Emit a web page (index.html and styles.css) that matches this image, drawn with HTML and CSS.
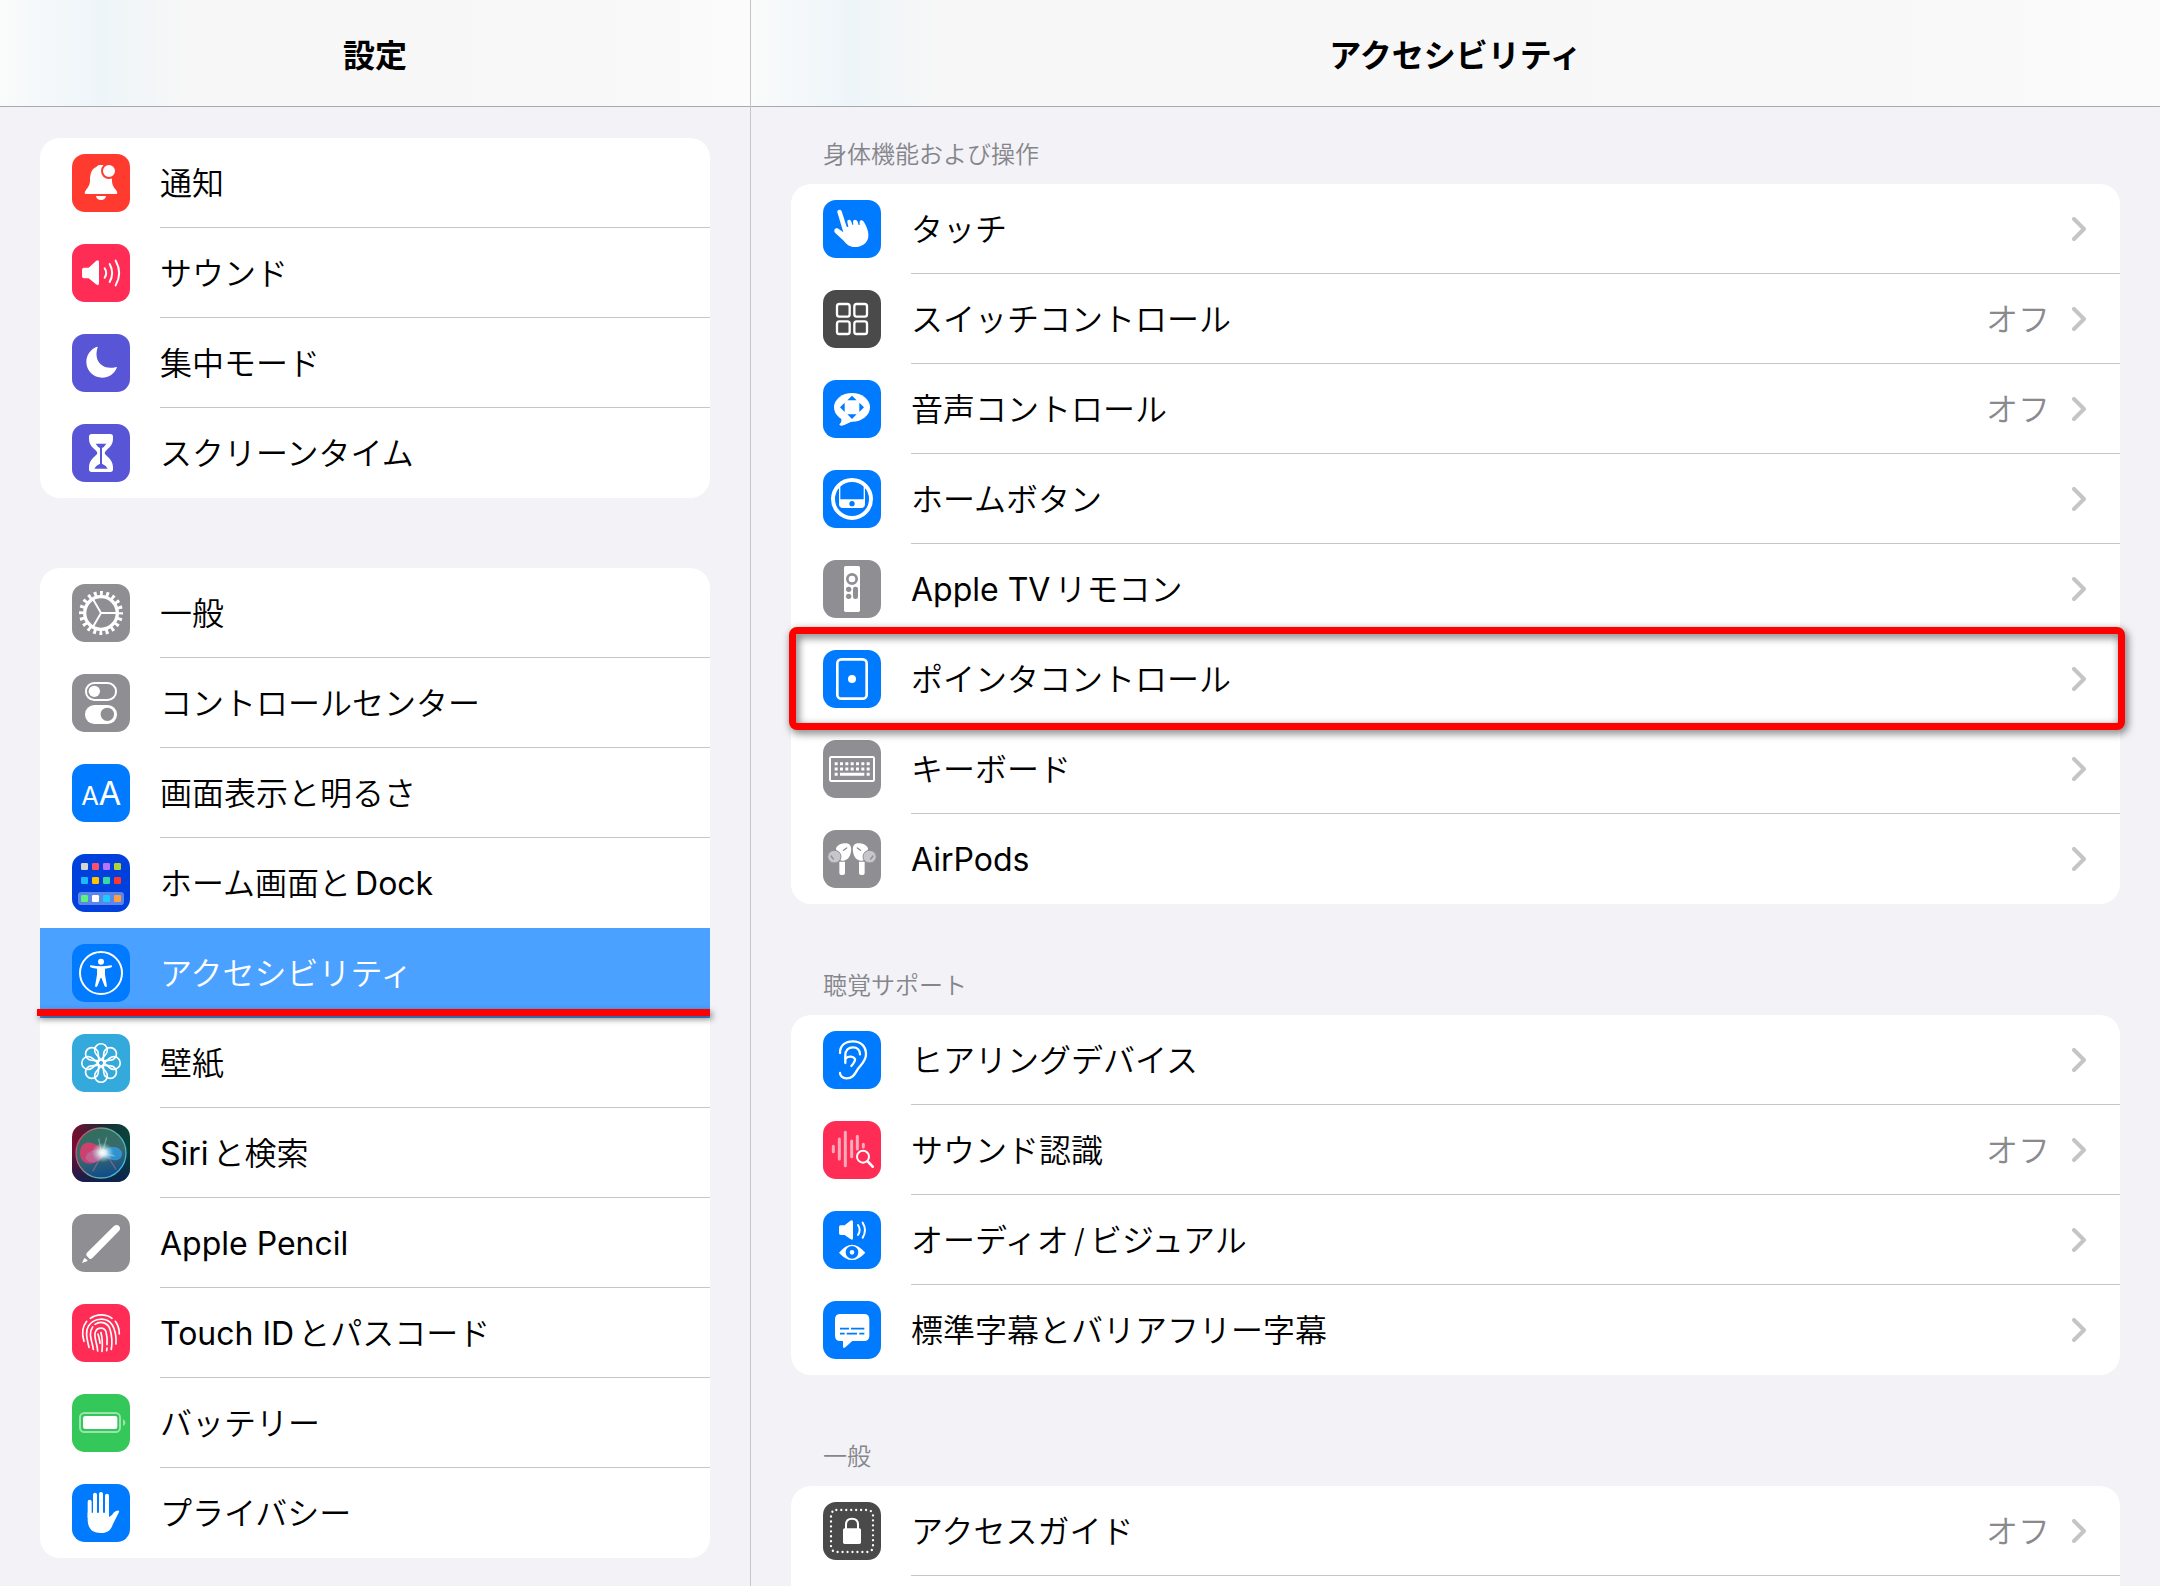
FILE: index.html
```html
<!doctype html>
<html lang="ja">
  <head>
    <meta charset="UTF-8" />
    <meta name="viewport" content="width=device-width, initial-scale=1.0" />
    <title>設定</title>
    <link rel="stylesheet" href="styles.css">
  </head>
  <body>
    <aside class="pane sidebar">
      <header class="pane-header">
        <h1>設定</h1>
      </header>

      <nav class="pane-body sidebar-body">
        <ul class="group">
          <li>
            <a class="row" href="#">
              <svg class="icon red" viewBox="0 0 174 174" fill="#fff">
                <path d="M42 120C36 120 38 113 42 108C50 98 54 92 54 78C54 58 60 44 73 39C76 34 82 33 87 33S98 34 101 39C114 44 120 58 120 78C120 92 124 98 132 108C136 113 138 120 132 120Z" />
                <circle cx="111" cy="51" r="21" stroke="#ff3b30" stroke-width="6" />
                <path d="M72 126H102C101 134 95 138 87 138S73 134 72 126Z" />
              </svg>
              <span class="label">通知</span>
            </a>
          </li>
          <li>
            <a class="row" href="#">
              <svg class="icon pink" viewBox="0 0 174 174" fill="#fff">
                <path d="M36 71H50L72 51Q81 46 81 54V118Q81 127 72 121L50 103H36Q30 103 30 97V77Q30 71 36 71Z" />
                <path d="M98 73Q107 87 98 101M113 60Q128 87 113 114M131 50Q152 87 131 124" fill="none" stroke="#fff" stroke-width="6" stroke-linecap="round" />
              </svg>
              <span class="label">サウンド</span>
            </a>
          </li>
          <li>
            <a class="row" href="#">
              <svg class="icon indigo" viewBox="0 0 174 174" fill="#fff">
                <path d="M77 40C70 62 74 80 86 91C98 102 114 104 133 99Q136 98 134 102C126 121 109 131 91 131C64 131 43 110 43 84C43 63 56 46 73 39Q78 37 77 40Z" />
              </svg>
              <span class="label">集中モード</span>
            </a>
          </li>
          <li>
            <a class="row" href="#">
              <svg class="icon indigo" viewBox="0 0 174 174" fill="#fff">
                <path d="M59 30H115Q123 30 123 38V44C123 62 112 70 104 78Q98 84 98 87Q98 90 104 95C112 103 123 112 123 130V136Q123 144 115 144H59Q51 144 51 136V130C51 112 62 103 70 95Q76 90 76 87Q76 84 70 78C62 70 51 62 51 44V38Q51 30 59 30Z" />
                <path d="M71 59H103Q96 70 90 72V119Q102 124 107 134H67Q72 124 84 119V72Q78 70 71 59Z" fill="#5856d6" />
              </svg>
              <span class="label">スクリーンタイム</span>
            </a>
          </li>
        </ul>

        <ul class="group">
          <li>
            <a class="row" href="#">
              <svg class="icon gray" viewBox="0 0 174 174" fill="none" stroke="#fff">
                <circle cx="87" cy="87" r="49" stroke-width="10" />
                <circle cx="87" cy="87" r="59" stroke-width="14" pathLength="200" stroke-dasharray="4.6 5.4" stroke-dashoffset="2.3" />
                <path d="M87 87H134M87 87L64 47M87 87L64 127" stroke-width="6" />
              </svg>
              <span class="label">一般</span>
            </a>
          </li>
          <li>
            <a class="row" href="#">
              <svg class="icon gray" viewBox="0 0 174 174" fill="#fff">
                <rect x="42" y="27" width="90" height="51" rx="25" fill="none" stroke="#fff" stroke-width="6" />
                <circle cx="67" cy="52" r="17" />
                <rect x="39" y="93" width="96" height="57" rx="28" />
                <circle cx="106" cy="121" r="20" fill="#8e8e93" />
              </svg>
              <span class="label">コントロールセンター</span>
            </a>
          </li>
          <li>
            <a class="row" href="#">
              <svg class="icon blue" viewBox="0 0 174 174" fill="#fff" text-anchor="middle">
                <text class="glyph" x="54" y="124" font-size="77">A</text>
                <text class="glyph" x="114" y="124" font-size="99">A</text>
              </svg>
              <span class="label">画面表示と明るさ</span>
            </a>
          </li>
          <li>
            <a class="row no-line" href="#">
              <svg class="icon royal" viewBox="0 0 174 174">
                <rect x="18" y="114" width="138" height="39" rx="10" fill="#5b86ea" />
                <rect x="27" y="27" width="21" height="21" rx="4" fill="#d6d6d0" />
                <rect x="60" y="27" width="21" height="21" rx="4" fill="#ff5068" />
                <rect x="93" y="27" width="21" height="21" rx="4" fill="#b773ff" />
                <rect x="126" y="27" width="21" height="21" rx="4" fill="#b0d236" />
                <rect x="27" y="69" width="21" height="21" rx="4" fill="#1cb8fa" />
                <rect x="60" y="69" width="21" height="21" rx="4" fill="#ffc300" />
                <rect x="93" y="69" width="21" height="21" rx="4" fill="#38d8a5" />
                <rect x="126" y="69" width="21" height="21" rx="4" fill="#ff382e" />
                <rect x="27" y="123" width="21" height="21" rx="4" fill="#5df27a" />
                <rect x="60" y="123" width="21" height="21" rx="4" fill="#fff" />
                <rect x="93" y="123" width="21" height="21" rx="4" fill="#1ccbff" />
                <rect x="126" y="123" width="21" height="21" rx="4" fill="#ff9f45" />
              </svg>
              <span class="label">ホーム画面と<span lang="en">Dock</span></span>
            </a>
          </li>
          <li>
            <a class="row selected underlined" href="#" aria-current="page">
              <svg class="icon blue" viewBox="0 0 174 174" fill="#fff">
                <circle cx="87" cy="87" r="63" fill="none" stroke="#fff" stroke-width="6" />
                <circle cx="87" cy="53" r="9" />
                <path d="M57 64Q87 70 117 64Q121 64 120 68Q119 71 99 74V92L105 127Q102 131 98 127L88 101H86L76 127Q72 131 69 127L75 92V74Q55 71 54 68Q53 64 57 64Z" />
              </svg>
              <span class="label">アクセシビリティ</span>
            </a>
          </li>
          <li>
            <a class="row" href="#">
              <svg class="icon cyan" viewBox="0 0 174 174" fill="none" stroke="#fff" stroke-width="5">
                <defs>
                  <path id="petal" d="M87 78L72 60A19 19 0 1 1 102 60Z" />
                </defs>
                <use href="#petal" />
                <use href="#petal" transform="rotate(45 87 87)" />
                <use href="#petal" transform="rotate(90 87 87)" />
                <use href="#petal" transform="rotate(135 87 87)" />
                <use href="#petal" transform="rotate(180 87 87)" />
                <use href="#petal" transform="rotate(225 87 87)" />
                <use href="#petal" transform="rotate(270 87 87)" />
                <use href="#petal" transform="rotate(315 87 87)" />
                <circle cx="87" cy="87" r="9" />
              </svg>
              <span class="label">壁紙</span>
            </a>
          </li>
          <li>
            <a class="row" href="#">
              <svg class="icon siri" viewBox="0 0 174 174">
                <defs>
                  <linearGradient id="siri-back" x1="0" y1="0" x2="1" y2="0">
                    <stop offset="0" stop-color="#7a0c30" />
                    <stop offset="0.5" stop-color="#1d2a35" />
                    <stop offset="1" stop-color="#06453c" />
                  </linearGradient>
                  <linearGradient id="siri-shade" x1="0" y1="0" x2="0" y2="1">
                    <stop offset="0.4" stop-color="#0a1f4a" stop-opacity="0" />
                    <stop offset="1" stop-color="#0c1f52" stop-opacity="0.85" />
                  </linearGradient>
                  <linearGradient id="siri-ring" x1="0" y1="0.3" x2="1" y2="0.7">
                    <stop offset="0" stop-color="#e0406c" />
                    <stop offset="0.5" stop-color="#5fae98" />
                    <stop offset="1" stop-color="#3fb7e6" />
                  </linearGradient>
                  <linearGradient id="siri-orb" x1="0.4" y1="0" x2="0.6" y2="1">
                    <stop offset="0" stop-color="#2f6f5c" />
                    <stop offset="0.5" stop-color="#3a6a6c" />
                    <stop offset="1" stop-color="#0d4a8c" />
                  </linearGradient>
                  <radialGradient id="siri-glow">
                    <stop offset="0" stop-color="#fff" />
                    <stop offset="0.3" stop-color="#f4fdff" stop-opacity="0.85" />
                    <stop offset="1" stop-color="#9fe0e6" stop-opacity="0" />
                  </radialGradient>
                </defs>
                <rect width="174" height="174" fill="url(#siri-back)" />
                <rect width="174" height="174" fill="url(#siri-shade)" />
                <circle cx="87" cy="87" r="75" fill="url(#siri-orb)" stroke="url(#siri-ring)" stroke-width="4" />
                <path d="M100 88C78 126 28 132 24 90C22 46 66 42 100 88Z" fill="#e63a70" fill-opacity="0.85" />
                <path d="M40 104C64 126 84 112 96 94L84 80C66 74 44 82 40 104Z" fill="#a9a0d8" fill-opacity="0.35" />
                <path d="M84 88C100 66 142 60 150 86C152 114 116 118 84 88Z" fill="#2f9be0" fill-opacity="0.85" />
                <path d="M104 92L132 136M88 96L62 142" stroke="#b06c9c" stroke-width="4" stroke-opacity="0.6" />
                <ellipse cx="92" cy="86" rx="34" ry="30" fill="url(#siri-glow)" />
                <path d="M88 86L80 44M92 84L104 40M92 88L128 96" stroke="#dff6f4" stroke-width="4" stroke-opacity="0.35" />
              </svg>
              <span class="label"><span lang="en">Siri</span>と検索</span>
            </a>
          </li>
          <li>
            <a class="row" href="#">
              <svg class="icon gray" viewBox="0 0 174 174" fill="#fff">
                <path d="M125 37Q134 29 141 36Q148 44 140 52L62 131Q55 138 50 132L44 125Q40 120 47 114Z" />
                <path d="M30 147L37 132Q44 134 47 141Z" />
              </svg>
              <span class="label"><span lang="en">Apple Pencil</span></span>
            </a>
          </li>
          <li>
            <a class="row" href="#">
              <svg class="icon pink" viewBox="0 0 174 174" fill="none" stroke="#fff" stroke-width="5" stroke-linecap="round">
                <path d="M55 43C74 29 102 29 120 43" />
                <path d="M44 52C32 67 29 90 36 112M130 52C138 63 142 75 142 90" />
                <path d="M51 130C46 108 38 84 50 65C66 41 104 38 121 63C130 78 133 100 132 120" />
                <path d="M64 136C60 110 48 88 62 69M69 61C86 49 108 56 114 76C119 92 121 116 118 136" />
                <path d="M77 141C76 118 64 98 70 84C76 68 98 69 102 84C106 98 106 110 105 122M105 132L104 140" />
                <path d="M87 86C92 105 92 122 90 142M78 90C80 98 84 108 84 118" />
              </svg>
              <span class="label"><span lang="en">Touch ID</span>とパスコード</span>
            </a>
          </li>
          <li>
            <a class="row" href="#">
              <svg class="icon green" viewBox="0 0 174 174" fill="#fff">
                <rect x="24" y="57" width="120" height="57" rx="13" fill="none" stroke="#fff" stroke-opacity="0.5" stroke-width="6" />
                <rect x="33" y="66" width="103" height="39" rx="7" />
                <path d="M153 75Q168 86 153 97Z" fill-opacity="0.5" />
              </svg>
              <span class="label">バッテリー</span>
            </a>
          </li>
          <li>
            <a class="row" href="#">
              <svg class="icon blue" viewBox="0 0 174 174" fill="#fff">
                <path d="M53 53V100M69 32V95M87 30V95M105 35V95" stroke="#fff" stroke-width="12" stroke-linecap="round" />
                <path d="M47 86V105C47 135 62 147 86 147C108 147 116 138 122 122L141 84Q143 79 135 80Q127 81 120 93L111 99V86Z" />
              </svg>
              <span class="label">プライバシー</span>
            </a>
          </li>
        </ul>
      </nav>
    </aside>

    <main class="pane detail">
      <header class="pane-header">
        <h2>アクセシビリティ</h2>
      </header>

      <div class="pane-body detail-body">
        <h3 class="group-title">身体機能および操作</h3>
        <ul class="group">
          <li>
            <a class="row" href="#">
              <svg class="icon blue" viewBox="0 0 174 174" fill="#fff">
                <path d="M43 37C41 28 54 26 56 34L71 80L76 81L73 66C72 58 82 57 85 65L88 74L91 74L90 65C91 57 101 57 104 65L107 75L110 75L110 65C113 58 121 60 124 68C134 85 137 98 136 110C134 130 115 141 95 141C80 141 70 133 62 122L36 98C30 90 38 82 46 86L61 97Z" />
              </svg>
              <span class="label">タッチ</span>
              <svg class="chevron" viewBox="0 0 14 24"><path d="M2 2L12 12L2 22" /></svg>
            </a>
          </li>
          <li>
            <a class="row" href="#">
              <svg class="icon dark" viewBox="0 0 174 174" fill="none" stroke="#fff" stroke-width="7">
                <rect x="42" y="42" width="38" height="38" rx="7" />
                <rect x="94" y="42" width="38" height="38" rx="7" />
                <rect x="42" y="94" width="38" height="38" rx="7" />
                <rect x="94" y="94" width="38" height="38" rx="7" />
              </svg>
              <span class="label">スイッチコントロール</span>
              <span class="value">オフ</span>
              <svg class="chevron" viewBox="0 0 14 24"><path d="M2 2L12 12L2 22" /></svg>
            </a>
          </li>
          <li>
            <a class="row" href="#">
              <svg class="icon blue" viewBox="0 0 174 174" fill="#fff">
                <ellipse cx="87" cy="82" rx="54" ry="43" />
                <path d="M52 112Q60 124 49 133Q50 140 64 135L96 120Z" />
                <path d="M87 47L101 61H73ZM87 117L101 103H73ZM51 82L65 68V96ZM123 82L109 68V96Z" fill="#007aff" />
              </svg>
              <span class="label">音声コントロール</span>
              <span class="value">オフ</span>
              <svg class="chevron" viewBox="0 0 14 24"><path d="M2 2L12 12L2 22" /></svg>
            </a>
          </li>
          <li>
            <a class="row" href="#">
              <svg class="icon blue" viewBox="0 0 174 174" fill="#fff">
                <circle cx="87" cy="87" r="57" fill="none" stroke="#fff" stroke-width="12" />
                <path d="M50 50V92M124 50V92" stroke="#fff" stroke-width="4" />
                <path d="M48 88H126V103Q126 114 114 114H60Q48 114 48 103Z" />
                <circle cx="87" cy="101" r="8" fill="#007aff" />
              </svg>
              <span class="label">ホームボタン</span>
              <svg class="chevron" viewBox="0 0 14 24"><path d="M2 2L12 12L2 22" /></svg>
            </a>
          </li>
          <li>
            <a class="row" href="#">
              <svg class="icon gray" viewBox="0 0 174 174" fill="#8e8e93">
                <rect x="63" y="18" width="48" height="138" rx="5" fill="#fff" />
                <circle cx="87" cy="57" r="14" fill="none" stroke="#8e8e93" stroke-width="8" />
                <circle cx="77" cy="88" r="8" />
                <circle cx="77" cy="109" r="8" />
                <rect x="90" y="80" width="15" height="37" rx="7" />
              </svg>
              <span class="label"><span lang="en">Apple TV</span>リモコン</span>
              <svg class="chevron" viewBox="0 0 14 24"><path d="M2 2L12 12L2 22" /></svg>
            </a>
          </li>
          <li>
            <a class="row framed" href="#">
              <svg class="icon blue" viewBox="0 0 174 174" fill="#fff">
                <rect x="43" y="28" width="88" height="118" rx="12" fill="none" stroke="#fff" stroke-width="8" />
                <circle cx="87" cy="87" r="12" />
              </svg>
              <span class="label">ポインタコントロール</span>
              <svg class="chevron" viewBox="0 0 14 24"><path d="M2 2L12 12L2 22" /></svg>
            </a>
          </li>
          <li>
            <a class="row" href="#">
              <svg class="icon gray" viewBox="0 0 174 174" fill="none" stroke="#fff">
                <rect x="21" y="51" width="132" height="72" rx="4" stroke-width="6" />
                <path d="M35 71H140M35 87H140" stroke-width="9" stroke-dasharray="9 7" />
                <path d="M35 103H44M51 103H124M131 103H140" stroke-width="9" />
              </svg>
              <span class="label">キーボード</span>
              <svg class="chevron" viewBox="0 0 14 24"><path d="M2 2L12 12L2 22" /></svg>
            </a>
          </li>
          <li>
            <a class="row" href="#">
              <svg class="icon gray" viewBox="0 0 174 174">
                <defs>
                  <g id="bud">
                    <path d="M39 54C44 44 56 39 70 40C82 41 86 52 84 64C82 80 74 92 60 92C52 92 46 88 42 80Z" fill="#fff" />
                    <path d="M49 95H66V129Q66 135 60 135H55Q49 135 49 129Z" fill="#fff" />
                    <ellipse cx="34" cy="80" rx="20" ry="19" fill="#c7c7cb" stroke="#8e8e93" stroke-width="3" />
                    <path d="M24 78L31 87M62 61L71 54" stroke="#8e8e93" stroke-width="4" stroke-linecap="round" />
                  </g>
                </defs>
                <use href="#bud" />
                <use href="#bud" transform="translate(174 0) scale(-1 1)" />
              </svg>
              <span class="label"><span lang="en">AirPods</span></span>
              <svg class="chevron" viewBox="0 0 14 24"><path d="M2 2L12 12L2 22" /></svg>
            </a>
          </li>
        </ul>

        <h3 class="group-title">聴覚サポート</h3>
        <ul class="group">
          <li>
            <a class="row" href="#">
              <svg class="icon blue" viewBox="0 0 174 174" fill="none" stroke="#fff" stroke-width="7" stroke-linecap="round">
                <path d="M51 66C51 44 66 31 90 31C114 31 129 46 129 70C129 92 112 102 102 118C94 132 88 142 70 142C58 142 51 134 51 126" />
                <path d="M67 96V74C67 57 77 49 90 49C103 49 111 58 111 70" />
                <path d="M68 82C78 74 92 76 96 84Q97 92 85 105" />
              </svg>
              <span class="label">ヒアリングデバイス</span>
              <svg class="chevron" viewBox="0 0 14 24"><path d="M2 2L12 12L2 22" /></svg>
            </a>
          </li>
          <li>
            <a class="row" href="#">
              <svg class="icon pink" viewBox="0 0 174 174" fill="none" stroke="#fff" stroke-linecap="round">
                <path d="M31 76V92M49 54V114M67 34V134M86 60V107M103 46V84M121 70V78" stroke-width="9" stroke-opacity="0.6" />
                <circle cx="120" cy="107" r="18" fill="#ff2d55" stroke-width="6" />
                <path d="M134 121L149 137" stroke-width="8" />
              </svg>
              <span class="label">サウンド認識</span>
              <span class="value">オフ</span>
              <svg class="chevron" viewBox="0 0 14 24"><path d="M2 2L12 12L2 22" /></svg>
            </a>
          </li>
          <li>
            <a class="row" href="#">
              <svg class="icon blue" viewBox="0 0 174 174" fill="#fff">
                <path d="M53 43H65L82 29Q90 25 90 33V82Q90 89 82 84L65 72H53Q48 72 48 67V48Q48 43 53 43Z" />
                <path d="M105 42Q115 57 105 72M119 35Q133 57 119 80" fill="none" stroke="#fff" stroke-width="6" stroke-linecap="round" />
                <path d="M48 125Q68 101 87 101T127 125Q107 147 87 147T48 125Z" />
                <circle cx="87" cy="124" r="13" fill="none" stroke="#007aff" stroke-width="12" />
              </svg>
              <span class="label">オーディオ<span class="slash">/</span>ビジュアル</span>
              <svg class="chevron" viewBox="0 0 14 24"><path d="M2 2L12 12L2 22" /></svg>
            </a>
          </li>
          <li>
            <a class="row" href="#">
              <svg class="icon blue" viewBox="0 0 174 174" fill="#fff">
                <path d="M52 39H123Q139 39 139 55V104Q139 120 123 120H88L67 139Q60 144 60 136V120H52Q36 120 36 104V55Q36 39 52 39Z" />
                <path d="M51 83H78M84 83H124M51 98H65M71 98H102M109 98H124" stroke="#007aff" stroke-width="5" />
              </svg>
              <span class="label">標準字幕とバリアフリー字幕</span>
              <svg class="chevron" viewBox="0 0 14 24"><path d="M2 2L12 12L2 22" /></svg>
            </a>
          </li>
        </ul>

        <h3 class="group-title">一般</h3>
        <ul class="group group-open">
          <li>
            <a class="row" href="#">
              <svg class="icon dark" viewBox="0 0 174 174" fill="#fff">
                <rect x="24" y="24" width="126" height="126" rx="16" fill="none" stroke="#fff" stroke-width="7" stroke-linecap="round" pathLength="320" stroke-dasharray="0 10" />
                <path d="M69 82V68Q69 50 87 50T105 68V82" fill="none" stroke="#fff" stroke-width="6" />
                <rect x="60" y="79" width="54" height="47" rx="5" />
              </svg>
              <span class="label">アクセスガイド</span>
              <span class="value">オフ</span>
              <svg class="chevron" viewBox="0 0 14 24"><path d="M2 2L12 12L2 22" /></svg>
            </a>
          </li>
        </ul>
      </div>
    </main>
  </body>
</html>
```

FILE: styles.css
```css
* {
  margin: 0;
  padding: 0;
  box-sizing: border-box;
}

body {
  font-family: Inter, 'Noto Sans CJK JP', sans-serif;
  font-size: 32px;
  line-height: 40px;
  color: #000;
  background: #f2f2f7;
  height: 100vh;
  display: flex;
  overflow: hidden;
  text-autospace: normal;
}

ul {
  list-style: none;
}

/* Panes */
.pane {
  display: flex;
  flex-direction: column;
  min-width: 0;
}

.sidebar {
  flex: 0 0 751px;
  border-right: 1px solid #c6c6c8;
}

.detail {
  flex: 1;
}

.pane-header {
  flex: none;
  height: 107px;
  padding-top: 6px;
  display: flex;
  align-items: center;
  justify-content: center;
  border-bottom: 1px solid #a9a9ad;
  background: linear-gradient(90deg, #fafbfb 0, #eef5f9 100px, #f7f7f7 190px, #f8f8f8 80%, #fbfbfb 100%);
}

.pane-header h1,
.pane-header h2 {
  font-size: 32px;
  font-weight: 700;
}

.pane-body {
  flex: 1;
  min-height: 0;
  display: flex;
  flex-direction: column;
}

.sidebar-body {
  padding: 31px 40px 0;
  gap: 70px;
}

.detail-body {
  padding: 28px 40px 0;
}

/* Groups */
.group {
  flex: none;
  background: #fff;
  border-radius: 20px;
}

.group-open {
  flex: 1;
  border-radius: 20px 20px 0 0;
}

.group-title {
  padding: 0 32px 9px;
  font-size: 24px;
  font-weight: 350;
  color: #85858b;
}

.group + .group-title {
  padding-top: 62px;
}

/* Rows */
.row {
  position: relative;
  display: flex;
  align-items: center;
  height: 90px;
  padding: 0 32px;
  color: inherit;
  text-decoration: none;
}

.row::before {
  content: '';
  position: absolute;
  left: 120px;
  right: 0;
  bottom: 0;
  height: 1px;
  background: #c6c6c8;
}

li:last-child > .row::before,
.row.no-line::before,
.row.selected::before {
  display: none;
}

.group-open li:last-child > .row::before {
  display: block;
}

.row.selected {
  background: #4ba1ff;
  color: #fff;
}

.label {
  flex: 1;
  margin-left: 30px;
}

.label,
.value {
  padding-top: 2px;
  font-weight: 350;
}

.label [lang='en'] {
  font-weight: 400;
}

.slash {
  margin: 0 5px;
}

.value {
  margin-right: 22px;
  color: #8a8a8e;
}

.chevron {
  width: 14px;
  height: 24px;
  margin-right: 2px;
  fill: none;
  stroke: #c5c5c7;
  stroke-width: 4;
  stroke-linecap: round;
  stroke-linejoin: round;
}

/* Marks over the rows */
.row.underlined::after {
  content: '';
  position: absolute;
  left: -3px;
  right: 0;
  bottom: 2px;
  height: 7px;
  background: #f00;
  box-shadow: 2px 3px 6px rgba(0, 0, 0, 0.5);
  z-index: 1;
}

.row.framed::after {
  content: '';
  position: absolute;
  top: -7px;
  right: -5px;
  bottom: -6px;
  left: -2px;
  border: 7px solid #f00;
  border-radius: 8px;
  filter: drop-shadow(2px 3px 4px rgba(0, 0, 0, 0.6));
  z-index: 1;
}

/* Icons */
.icon {
  flex: none;
  width: 58px;
  height: 58px;
  border-radius: 13px;
}

.glyph {
  font-family: Inter, sans-serif;
  font-weight: 400;
}

.red {
  background: #ff3b30;
}

.pink {
  background: #ff2d55;
}

.indigo {
  background: #5856d6;
}

.gray {
  background: #8e8e93;
}

.dark {
  background: #4a4a4a;
}

.blue {
  background: #007aff;
}

.royal {
  background: #0040dd;
}

.cyan {
  background: #34aadc;
}

.green {
  background: #34c759;
}
```
